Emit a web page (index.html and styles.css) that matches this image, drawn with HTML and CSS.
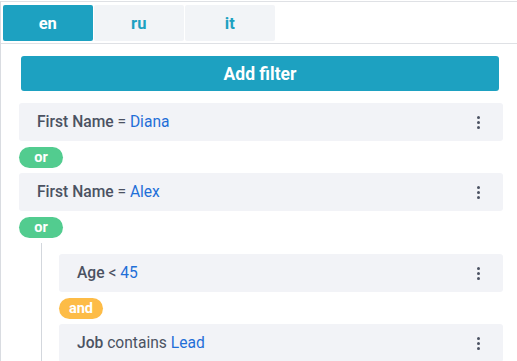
FILE: index.html
```html
<!DOCTYPE html>
<html>
<head>
<meta charset="utf-8">
<link rel="stylesheet" href="styles.css">
</head>
<body>
<div class="frame">
  <div class="tabs">
    <div class="tab active">en</div>
    <div class="tab">ru</div>
    <div class="tab">it</div>
  </div>
  <div class="content">
    <button class="add">Add filter</button>
    <div class="rules">
      <div class="rule"><span class="txt"><b>First Name</b> = <span class="val">Diana</span></span><span class="kebab"><i></i><i></i><i></i></span></div>
      <div class="pill or">or</div>
      <div class="rule"><span class="txt"><b>First Name</b> = <span class="val">Alex</span></span><span class="kebab"><i></i><i></i><i></i></span></div>
      <div class="pill or">or</div>
      <div class="group">
        <div class="rule"><span class="txt"><b>Age</b> &lt; <span class="val">45</span></span><span class="kebab"><i></i><i></i><i></i></span></div>
        <div class="pill and">and</div>
        <div class="rule"><span class="txt"><b>Job</b> contains <span class="val">Lead</span></span><span class="kebab"><i></i><i></i><i></i></span></div>
      </div>
    </div>
  </div>
</div>
</body>
</html>
```
FILE: styles.css
```css
html, body {
  margin: 0;
  padding: 0;
  background: #fff;
  overflow: hidden;
}
body {
  font-family: Roboto, "Liberation Sans", sans-serif;
  width: 517px;
  height: 361px;
}
.frame {
  margin-top: 1px;
  width: 540px;
  height: 400px;
  border-top: 1px solid #dfe1e5;
  border-left: 1px solid #d9dce1;
  box-sizing: border-box;
}
.tabs {
  display: flex;
  gap: 1.5px;
  padding: 3px 2px 2px;
  border-bottom: 1px solid #dfe1e5;
}
.tab {
  width: 89.5px;
  height: 36px;
  border-radius: 2px;
  background: #f2f4f7;
  color: #1da1c1;
  font-weight: 700;
  font-size: 16.5px;
  display: flex;
  align-items: center;
  justify-content: center;
}
.tab.active {
  background: #1da1c1;
  color: #fff;
}
.content {
  padding: 12px 0 0 18px;
}
.add {
  display: block;
  margin-left: 2px;
  width: 478px;
  height: 35px;
  border: none;
  border-radius: 3px;
  background: #1da1c1;
  color: #fff;
  font-family: Roboto, "Liberation Sans", sans-serif;
  font-weight: 700;
  font-size: 17.5px;
  padding: 0;
}
.rules {
  width: 484px;
  margin-top: 12px;
}
.rule {
  height: 38px;
  background: #f2f3f7;
  border-radius: 3px;
  display: flex;
  align-items: center;
  justify-content: space-between;
  padding: 0 23px 0 18px;
  font-size: 15.6px;
  color: #4b5262;
}
.rule b {
  font-weight: 500;
}
.val {
  color: #1f6fd8;
}
.kebab {
  display: flex;
  flex-direction: column;
  gap: 2px;
}
.kebab i {
  display: block;
  width: 3px;
  height: 3px;
  border-radius: 50%;
  background: #4b5262;
}
.pill {
  width: 44px;
  height: 21px;
  margin: 6px 0 5px;
  border-radius: 11px;
  color: #fff;
  font-weight: 700;
  font-size: 14.5px;
  display: flex;
  align-items: center;
  justify-content: center;
}
.pill.or {
  background: #52cc8f;
}
.pill.and {
  background: #fdbc47;
}
.group {
  margin: 5px 0 0 22px;
  border-left: 1px solid #d3d7dd;
  padding: 11px 0 20px 17px;
}
```
